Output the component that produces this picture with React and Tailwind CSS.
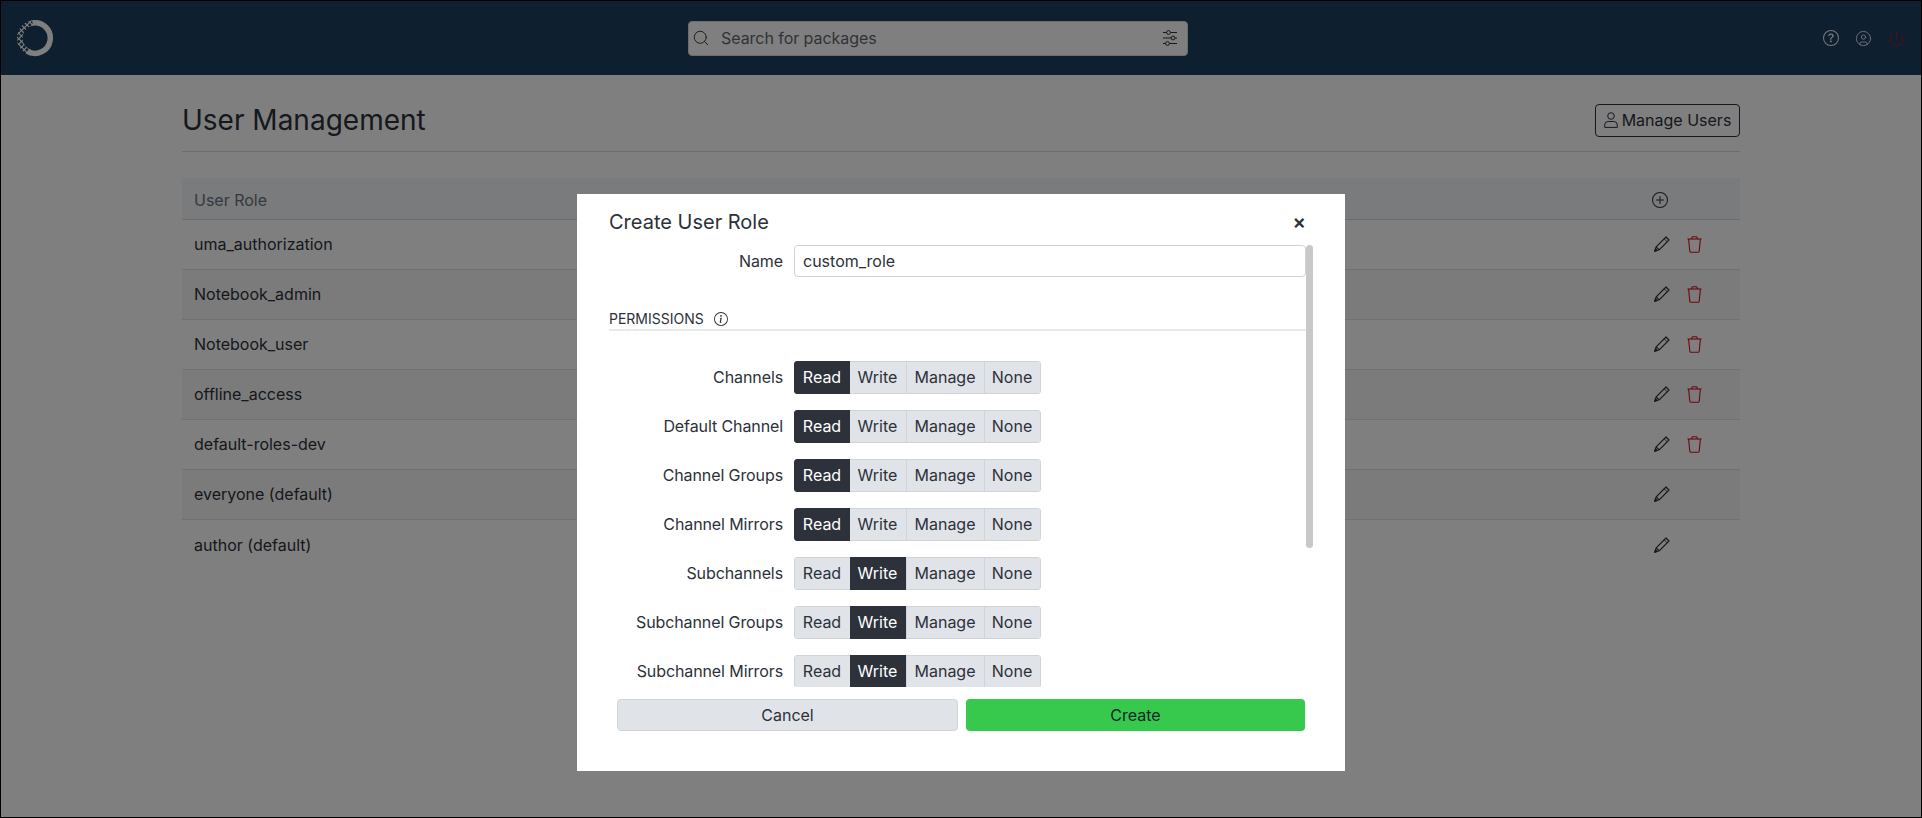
import { BsPlusCircle, BsQuestionCircle, BsInfoCircle } from 'react-icons/bs';
import { LuPower, LuCircleUser, LuSearch } from 'react-icons/lu';

const roles = [
  { name: 'uma_authorization', del: true },
  { name: 'Notebook_admin', del: true },
  { name: 'Notebook_user', del: true },
  { name: 'offline_access', del: true },
  { name: 'default-roles-dev', del: true },
  { name: 'everyone (default)', del: false },
  { name: 'author (default)', del: false },
];

const perms = [
  { label: 'Channels', active: 'Read' },
  { label: 'Default Channel', active: 'Read' },
  { label: 'Channel Groups', active: 'Read' },
  { label: 'Channel Mirrors', active: 'Read' },
  { label: 'Subchannels', active: 'Write' },
  { label: 'Subchannel Groups', active: 'Write' },
  { label: 'Subchannel Mirrors', active: 'Write' },
];

const latticeOffsets = [-16, -10.5, -5, 0.5, 6, 11.5, 17, 22.5, 28, 33.5, 39, 44.5, 50];

const Logo = () => (
  <svg width="38" height="38" viewBox="0 0 38 38" fill="none">
    <defs>
      <clipPath id="ring">
        <path
          clipRule="evenodd"
          d="M19 1 A18 18 0 1 0 19 37 A18 18 0 1 0 19 1 Z M19 6.5 A12.5 12.5 0 1 1 19 31.5 A12.5 12.5 0 1 1 19 6.5 Z"
        />
      </clipPath>
    </defs>
    <path d="M16.5 4 A15.25 15.25 0 1 1 11.5 32.3" stroke="#fff" strokeWidth="5.5" />
    <g clipPath="url(#ring)" stroke="#fff" strokeWidth="1.2">
      {latticeOffsets.map((c) => (
        <g key={c}>
          <path d={`M0 ${c} L17 ${c + 17}`} />
          <path d={`M0 ${c} L17 ${c - 17}`} />
        </g>
      ))}
    </g>
  </svg>
);

const Sliders = () => (
  <svg width="16" height="16" viewBox="0 0 16 16" fill="none" stroke="#333" strokeWidth="1">
    <path d="M1 2.5H15M1 8H15M1 13.5H15" />
    <circle cx="6.5" cy="2.5" r="1.9" fill="#fff" />
    <circle cx="11" cy="8" r="1.9" fill="#fff" />
    <circle cx="5.5" cy="13.5" r="1.9" fill="#fff" />
  </svg>
);

const PersonIcon = () => (
  <svg width="14" height="16" viewBox="0 0 14 16" fill="none" stroke="currentColor" strokeWidth="1">
    <circle cx="7" cy="4" r="3.3" />
    <path d="M.7 15.4V13a3.5 3.5 0 0 1 3.5-3.5h5.6a3.5 3.5 0 0 1 3.5 3.5v2.4Z" />
  </svg>
);

const PencilIcon = () => (
  <svg width="16" height="16" viewBox="0 0 16 16" fill="none" stroke="currentColor" strokeWidth="1.2" strokeLinejoin="round">
    <path d="M12 1 15 4 5.2 13.8.8 15.2 2.2 10.8Z" />
    <path d="M10.2 2.8 13.2 5.8M4.2 8.8 11.2 1.8M7.2 11.8 14.2 4.8" strokeWidth="0.9" />
    <path d="M2.2 10.8 5.2 13.8" />
    <path d="M.8 15.2 1.5 13 3 14.5Z" fill="currentColor" />
  </svg>
);

const TrashIcon = () => (
  <svg width="15" height="17" viewBox="0 0 15 17" fill="none" stroke="#d80c18" strokeWidth="1.1">
    <path d="M.5 3H14.5" />
    <path d="M4.6 3 5 1.2Q5.2.7 5.8.7H9.2Q9.8.7 10 1.2L10.4 3" />
    <path d="M1.6 3 2.8 15.2Q2.9 16.3 4 16.3H11Q12.1 16.3 12.2 15.2L13.4 3" />
  </svg>
);

const Segment = ({ active }) => (
  <div className="flex h-[33px] overflow-hidden rounded text-base">
    {[
      { opt: 'Read', cls: 'w-[56px] border-l' },
      { opt: 'Write', cls: 'w-[56px]' },
      { opt: 'Manage', cls: 'w-[78px] border-l' },
      { opt: 'None', cls: 'w-[57px] border-l border-r' },
    ].map(({ opt, cls }) => (
      <div
        key={opt}
        className={`flex items-center justify-center border-y pb-[1px] pr-[1px] ${cls} ${opt === active ? 'border-[#2c313a] bg-[#2c313a] text-white' : 'border-[#d0d3d8] bg-[#e0e3e8] text-[#2c313a]'}`}
      >
        {opt}
      </div>
    ))}
  </div>
);

export default function App() {
  return (
    <div className="relative h-[818px] w-[1922px] overflow-hidden border border-black bg-white font-['Inter',sans-serif] text-[#2c313a]">
      <header className="flex h-[74px] items-center bg-[#1c3e5e] pl-[15px] pr-[16px]">
        <Logo />
        <div className="ml-[634px] flex h-[35px] w-[500px] items-center rounded-sm border border-[#d8d8d8] bg-white pl-[3px] pr-[9px] text-[#5f6772]">
          <LuSearch size={18} strokeWidth={1.25} className="text-[#333]" />
          <span className="ml-[11px] flex-1 text-base tracking-[-0.05px]">Search for packages</span>
          <Sliders />
        </div>
        <div className="ml-auto flex items-center gap-[16px] text-[#f0f0f0]">
          <BsQuestionCircle size={16} />
          <LuCircleUser size={17} strokeWidth={1.25} />
          <LuPower size={17} strokeWidth={1.25} className="text-[#e00a0a]" />
        </div>
      </header>

      <main className="ml-[181px] w-[1558px]">
        <div className="flex h-[77px] items-center justify-between border-b border-[#d8d8d8] pt-[14px]">
          <h1 className="text-[28px] font-normal leading-none">User Management</h1>
          <button className="flex h-[33px] w-[145px] items-center justify-center gap-[4px] rounded border border-[#2c313a] text-base">
            <PersonIcon />
            Manage Users
          </button>
        </div>

        <div className="mt-[26px]">
          <div className="flex h-[42px] items-center justify-between border-b border-[#d8d8d8] bg-[#f4f6f9] pl-[12px] pr-[72px] pt-[2px] text-base text-[#6b7280]">
            <span>User Role</span>
            <BsPlusCircle size={16} className="text-[#2c313a]" />
          </div>
          {roles.map((role, i) => (
            <div
              key={role.name}
              className={`flex h-[50px] items-center pb-[1px] pl-[12px] text-base ${i < roles.length - 1 ? 'border-b border-[#e2e2e2]' : ''} ${i % 2 === 1 ? 'bg-[#f6f6f6]' : ''}`}
            >
              <span className="flex-1">{role.name}</span>
              <div className="flex w-[86px] items-center gap-[17px]">
                <PencilIcon />
                {role.del && <TrashIcon />}
              </div>
            </div>
          ))}
        </div>
      </main>

      {/* overlay */}
      <div className="absolute inset-0 flex justify-center bg-black/50 pt-[193px]">
        <div className="h-[577px] w-[768px] bg-white pl-[32px]">
          <div className="flex h-[51px] items-center justify-between pr-[39px] pt-[5px]">
            <h2 className="text-xl font-normal">Create User Role</h2>
            <span className="text-[20px] font-semibold leading-none">×</span>
          </div>
          <div className="flex h-[442px]">
            <div className="w-[697px] overflow-hidden">
              <div className="flex items-center gap-[11px]">
                <label className="w-[174px] text-right text-base tracking-[-0.1px]">Name</label>
                <div className="flex h-[32px] w-[512px] items-center rounded border border-[#d0d3d8] px-[8px] text-base">custom_role</div>
              </div>
              <div className="mt-[33px] flex h-[21px] items-center gap-[10px] border-b-2 border-[#e8e9eb] pb-[1px] text-sm">
                PERMISSIONS
                <BsInfoCircle size={14} />
              </div>
              <div className="mt-[30px] flex flex-col gap-[16px]">
                {perms.map((p) => (
                  <div key={p.label} className="flex items-center gap-[11px]">
                    <span className="w-[174px] pb-[1px] text-right text-base tracking-[-0.1px]">{p.label}</span>
                    <Segment active={p.active} />
                  </div>
                ))}
              </div>
            </div>
            <div className="h-[303px] w-[7px] rounded-full bg-[#c8c8c8]" />
          </div>
          <div className="ml-[8px] mt-[12px] flex w-[688px] gap-[8px] text-base">
            <button className="h-[32px] flex-1 rounded border border-[#d0d3d8] bg-[#e0e3e8]">Cancel</button>
            <button className="h-[32px] flex-1 rounded bg-[#36c94d] text-[#12262c]">Create</button>
          </div>
        </div>
      </div>
    </div>
  );
}
